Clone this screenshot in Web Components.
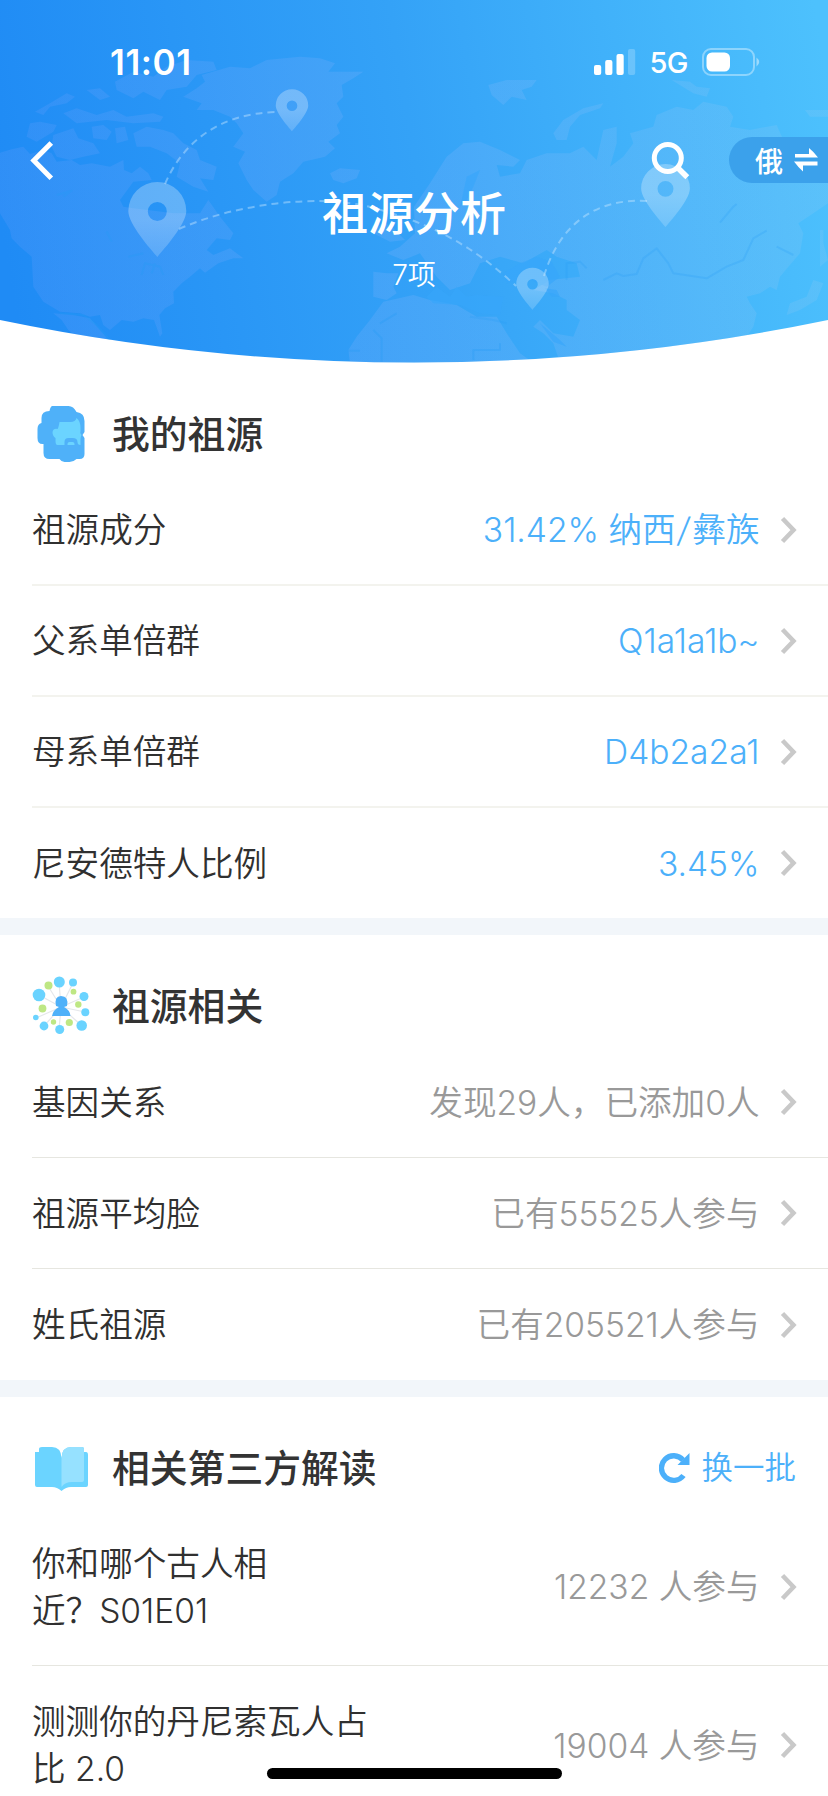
<!DOCTYPE html>
<html lang="zh-CN">
<head>
<meta charset="utf-8">
<title>祖源分析</title>
<style>
html,body{margin:0;padding:0;background:#fff}
body{width:828px;height:1796px;overflow:hidden;font-family:Inter,"Noto Sans CJK SC",sans-serif}
</style>
</head>
<body>
<ancestry-app></ancestry-app>
<script>
const define=(name,html,setup)=>customElements.define(name,class extends HTMLElement{
  connectedCallback(){
    if(this.shadowRoot)return;
    const t=document.createElement('template');
    t.innerHTML=html;
    this.attachShadow({mode:'open'}).append(t.content.cloneNode(true));
    if(setup)setup(this,this.shadowRoot);
  }
});

define('map-backdrop',`<style>:host{display:block;position:absolute;inset:0}svg{display:block}</style>
<svg width="828" height="364" viewBox="0 0 828 364">
<defs>
<linearGradient id="sky" gradientUnits="userSpaceOnUse" x1="0" y1="220" x2="828" y2="80"><stop offset="0" stop-color="#1f8bf5"/><stop offset=".5" stop-color="#34a2f7"/><stop offset="1" stop-color="#4dc1fd"/></linearGradient>
<linearGradient id="land" gradientUnits="userSpaceOnUse" x1="0" y1="0" x2="2484" y2="0"><stop offset="0" stop-color="#7fa2ff"/><stop offset=".5" stop-color="#a3bcff"/><stop offset="1" stop-color="#a2cbee"/></linearGradient>
<linearGradient id="pin" x1="0" y1="0" x2="0" y2="1"><stop offset="0" stop-color="#fff" stop-opacity=".27"/><stop offset=".5" stop-color="#fff" stop-opacity=".27"/><stop offset="1" stop-color="#fff" stop-opacity=".17"/></linearGradient>
<clipPath id="arc"><path d="M0 0H828V320A2037 2037 0 0 1 0 320Z"/></clipPath>
<path id="marker" fill-rule="evenodd" d="M0 37C-3 33-29 5-29-9A29 29 0 1 1 29-9C29 5 3 33 0 37ZM0-18A9.500 9.500 0 1 0 0 1 9.500 9.500 0 0 0 0-18Z"/>
</defs>
<g clip-path="url(#arc)">
<rect width="828" height="364" fill="url(#sky)"/>
<g transform="scale(.33333)" fill="url(#land)" fill-opacity=".17">
<path d="M0 458 35 448 70 440 90 462 130 450 155 460 170 485 215 480 240 495 275 490 330 500 370 480 372 510 395 520 420 500 445 520 455 540 400 545 360 600 370 620 400 625 520 640 600 640 625 600 660 650 700 700 690 720 650 715 620 750 640 765 690 745 730 775 700 775 655 790 615 818 600 805 570 830 545 850 520 875 522 910 495 925 478 945 487 1000 480 1010 462 960 430 955 400 965 365 960 330 990 310 975 300 945 270 950 240 940 180 935 130 905 100 860 95 770 60 740 35 715 30 690 0 640Z"/>
<path d="M160 940 185 960 205 990 230 1010 270 1015 300 1020 330 1025 300 990 270 955 220 945Z"/>
<path d="M550 290 590 265 615 245 605 225 690 200 750 205 800 180 900 170 960 175 1005 190 985 215 1040 215 1090 215 1060 235 1025 255 1030 290 1010 310 1030 350 1010 375 1020 400 985 425 1005 445 975 470 910 485 880 520 840 545 830 585 800 605 760 570 740 540 715 490 735 455 700 440 730 400 710 370 690 350 640 330 590 330 605 310Z"/>
<path d="M90 370 120 365 170 375 160 395 110 425 80 410Z"/>
<path d="M160 405 220 385 235 415 280 430 300 460 250 470 210 480 170 470 155 440Z"/>
<path d="M345 245 400 215 460 230 500 200 560 180 640 185 650 210 590 225 560 260 500 270 480 300 430 275 400 295 350 270Z"/>
<path d="M260 270 300 265 330 290 300 300ZM105 335 150 310 200 280 225 290 200 310 150 320 130 345ZM190 340 230 325 290 345 340 330 380 350 460 340 490 350 480 365 400 370 320 360 230 370Z"/>
<path d="M275 380 310 375 335 395 320 420 280 415ZM345 385 375 380 385 420 350 430ZM400 400 440 380 490 390 520 400 550 430 590 450 600 480 650 500 640 540 600 535 625 575 580 560 530 530 540 490 500 460 450 440 410 440Z"/>
<path d="M990 520 1020 505 1080 510 1070 535 1030 550 1000 540Z"/>
<path d="M1050 1088 1045 1050 1070 1010 1110 960 1150 905 1240 885 1290 900 1370 915 1430 950 1490 950 1520 1000 1560 1060 1600 1088Z"/>
<path d="M1120 815 1160 820 1195 820 1180 860 1190 880 1160 900 1120 890ZM1160 760 1200 740 1245 700 1242 620 1290 550 1340 470 1390 430 1440 425 1500 450 1560 480 1540 500 1490 495 1500 530 1560 520 1580 480 1640 460 1710 460 1750 440 1790 480 1810 390 1850 380 1850 430 1830 500 1870 470 1900 430 1890 400 1960 380 1970 345 2030 320 2080 330 2110 305 2180 320 2200 350 2190 380 2250 390 2330 375 2350 420 2484 420 2484 610 2440 640 2395 670 2410 700 2400 760 2365 800 2340 830 2330 870 2310 860 2280 880 2240 890 2250 910 2270 940 2260 980 2240 1010 2160 1040 2090 1088 1680 1088 1660 1030 1630 1000 1600 980 1620 960 1660 1000 1720 1010 1740 960 1700 930 1700 900 1660 880 1600 870 1650 840 1740 830 1730 790 1670 770 1640 750 1570 790 1500 770 1440 790 1410 850 1350 870 1310 830 1260 760 1210 780Z"/>
<path d="M1120 700 1150 665 1180 685 1215 720 1170 725Z"/>
<path d="M1660 400 1690 360 1750 325 1810 310 1800 325 1740 345 1710 380 1700 420 1670 420ZM1465 255 1520 240 1610 240 1595 260 1565 270 1580 300 1535 290 1510 315 1475 285ZM2015 240 2070 245 2090 260 2130 265 2120 290 2080 280ZM2415 330 2484 330 2484 350 2430 350Z"/>
<path d="M2460 690 2470 690 2470 730 2484 780 2460 800ZM2440 840 2470 850 2450 900 2400 930 2360 945 2370 910 2420 890Z"/>
</g>
<g transform="scale(.33333)" fill="none" stroke="#269bf5" stroke-opacity=".3" stroke-width="6" stroke-linejoin="round">
<path d="M170 585 215 572 190 590M320 695 335 725M425 825 435 790 480 800 490 825M455 820 465 790M385 770 430 760M180 940 250 945 290 975 330 1020M1120 990 1145 1015 1145 1085M1045 1052 1080 1052M1420 1080V1050H1500V1030M1140 970 1190 940"/>
<path d="M1810 840 1850 820 1870 828 1910 822 1930 775 1970 745 2005 790 2020 820 2120 835 2180 800 2230 780 2260 715 2300 692M2160 668 2200 620 2210 612M2330 740 2380 765" stroke-opacity=".22"/>
<path d="M1410 950 1480 960 1520 970M1700 840 1700 790 1740 785 1760 805" stroke-opacity=".22"/>
</g>
<g fill="#38a6fa" fill-opacity=".65" transform="scale(.33333)">
<path d="M1430 885 1510 890 1500 945 1440 940 1380 915 1300 910 1280 890 1310 860 1350 890 1370 860 1400 890ZM1510 820 1560 790 1610 770 1655 785 1680 830 1640 860 1580 835 1520 850ZM1635 865 1670 870 1680 890 1655 890ZM1385 600 1400 530 1440 510 1420 560 1400 600 1380 620ZM1620 970 1680 1020 1700 1040 1660 1025Z"/>
</g>
<g fill="none" stroke="#cde9ff" stroke-opacity=".42" stroke-width="2" stroke-dasharray="7 5">
<path d="M165 184C182 144 218 113 277 112"/>
<path d="M179 229C238 203 318 194 370 207C427 222 470 243 516 286"/>
<path d="M544 276C561 220 600 198 648 201"/>
</g>
<g fill="url(#pin)">
<use href="#marker" transform="translate(157.300 220)"/><use href="#marker" transform="translate(292 110.500) scale(.56)"/>
<use href="#marker" transform="translate(665.500 196) scale(.84)"/><use href="#marker" transform="translate(532.500 289) scale(.56)"/>
</g>
</g>
</svg>`);

define('status-bar',`<style>
:host{display:flex;justify-content:space-between;align-items:center;height:62px;padding:31px 68px 0 110px;color:#fff;box-sizing:content-box}
.time{font:600 35px/62px Inter,sans-serif;letter-spacing:.6px}
.right{display:flex;align-items:center}
.net{font:500 29px/62px Inter,sans-serif;margin:0 14px 0 13px;letter-spacing:-.5px;padding-top:1px}
svg{display:block}
</style>
<span class="time">11:01</span>
<div class="right">
<svg width="42" height="28" viewBox="0 0 42 28" fill="#fff"><rect y="17" width="7.200" height="10" rx="2"/><rect x="11.200" y="12" width="7.200" height="15" rx="2"/><rect x="22.500" y="6" width="7.200" height="21" rx="2"/><rect x="34" y="1" width="7.200" height="26" rx="2" opacity=".22"/></svg>
<span class="net">5G</span>
<svg width="58" height="28" viewBox="0 0 58 28"><rect x="1" y="1" width="51" height="26" rx="8" fill="none" stroke="#fff" stroke-width="2" opacity=".38"/><rect x="4.500" y="4.500" width="23.500" height="19" rx="5.500" fill="#fff"/><path d="M54.500 9.500Q60 14 54.500 18.500Z" fill="#fff" opacity=".45"/></svg>
</div>`);

define('nav-bar',`<style>
:host{display:flex;align-items:center;height:46px;padding-left:28px;margin-top:44px;color:#fff}
.back{margin-right:auto}.search{margin-right:36px}
svg{display:block}
.pill{display:flex;align-items:center;box-sizing:border-box;width:99px;height:46px;padding-left:26px;border-radius:23px 0 0 23px;background:#3ba1eb;gap:11px;font:500 28px/44px Inter,"Noto Sans CJK SC",sans-serif}
.pill span{padding-top:3px}
</style>
<svg class="back" width="30" height="44" viewBox="0 0 30 44" fill="none" stroke="#fff" stroke-width="5"><path d="M23.300 5 5.800 22.500 23.300 40.200"/></svg>
<svg class="search" width="42" height="42" viewBox="0 0 42 42" fill="none" stroke="#fff" stroke-width="5"><circle cx="16.800" cy="19" r="13.500"/><path d="M26 28 36.300 38.300" stroke-width="5.500"/></svg>
<div class="pill"><span>俄</span><svg width="25" height="26" viewBox="0 0 25 26" fill="#fff"><path d="M1 7V10.500H24Q20 5 15 1V7ZM23.500 18.500V14.500H0Q4 20 9 24.500V18.500Z"/></svg></div>`);

define('page-hero',`<style>
:host{display:block;position:relative;height:363px;color:#fff}
.content{position:relative;display:flex;flex-direction:column}
h1{margin:-2.500px 0 0 0;text-align:center;font:500 46px/64px Inter,"Noto Sans CJK SC",sans-serif}
p{margin:0;text-align:center;font:350 28px/60px Inter,"Noto Sans CJK SC",sans-serif}
</style>
<map-backdrop></map-backdrop>
<div class="content"><status-bar></status-bar><nav-bar></nav-bar><h1>祖源分析</h1><p>7项</p></div>`);

const icons={
face:`<g transform="translate(-4.500 -1)"><path fill="#4fb1f9" d="M25 2H41Q46 2 49 8 57 9 57 17V28L55 31 57 34V50Q57 55 52 55H49Q46 58 42 58H37Q34 58 32 55H22Q16 55 16 49V40H15Q10 40 10 34V25Q10 20 14 19V14Q14 7 22 7 23 2 25 2Z"/><path fill="#6bd4ff" d="M32 18H43Q48 18 49 14 53 17 53 24V27Q52 29 54 31 53 33 53 35V41Q50 41 50 38 50 34 45 34H41Q37 34 37 38V41H30Q28 41 28 37V34Q25 32 25 28 26 24 30 25Q31 24 32 18Z"/><path fill="#6bd4ff" d="M40 41V40Q40 38 42 38H45Q47 38 47 40V41Z"/></g>`,
network:`<g stroke="#e5e7ea" stroke-width="1.200"><path d="M29 30 27 5M29 30 41 6M29 30 7 18M29 30 52 20M29 30 53 35M29 30 50 49M29 30 27 53M29 30 12 49M29 30 4 41M29 30 16 9"/></g><g fill="#6ad3ff"><circle cx="27.300" cy="5" r="5.500"/><circle cx="41" cy="5.500" r="4"/><circle cx="7" cy="18" r="6.300"/><circle cx="52" cy="19.500" r="4.500"/><circle cx="53.300" cy="35.200" r="4"/><circle cx="49.700" cy="48.500" r="5.300"/><circle cx="27.700" cy="52.500" r="4.500"/><circle cx="12" cy="49" r="4.400"/><circle cx="3.800" cy="40.500" r="2.800"/></g><g fill="#bee784"><circle cx="16.500" cy="8.500" r="4"/><circle cx="41.500" cy="14.700" r="2.900"/><circle cx="46.300" cy="27.500" r="3.200"/><circle cx="10.500" cy="31.500" r="3.900"/><circle cx="21.500" cy="45" r="2.700"/><circle cx="37.300" cy="45.500" r="3.600"/></g><path fill="#4fb1f9" d="M24 29Q22 19 29 19 37 19 35 29L32 30Q38 33 38.500 39H20Q21 33 27 30Z"/>`,
book:`<g transform="translate(0 -1)"><path fill="#6bd4ff" d="M3 14H7V11Q7 9 10 9H20Q29 9 29.500 20 30 9 39 9H50Q52 9 52 11V14H54Q56 14 56 17V47Q56 49 54 49H39Q34 49 29.500 53 25 49 20 49H5Q3 49 3 47Z"/><path fill="#96e1ff" d="M29.500 20Q30 9 39 9H50Q52 9 52 11V42Q52 44 50 44H40Q33 44 29.500 49Z"/></g>`
};
define('section-heading',`<style>
:host{display:flex;align-items:center;height:80px;padding:31px 33px 1px 32px;color:#333}
:host([icon=book]){padding-bottom:0}
svg{display:block;width:58px;height:58px;margin-right:22px;flex:none;overflow:visible}
h2{margin:0 auto 0 0;font:500 37.800px/80px Inter,"Noto Sans CJK SC",sans-serif}
</style>
<svg viewBox="0 0 58 58"></svg><h2><slot></slot></h2><slot name="action"></slot>`,
(host,root)=>{root.querySelector('svg').innerHTML=icons[host.getAttribute('icon')]});

define('refresh-button',`<style>
:host{display:flex;align-items:center;color:#4cb0fa;font:350 31.500px/46px Inter,"Noto Sans CJK SC",sans-serif;gap:11px;margin-right:-1px}svg{display:block}
</style><svg width="31" height="32" viewBox="0 0 31 32"><path d="M24.500 23.500A12.300 12.300 0 1 1 24 8" fill="none" stroke="#4cb0fa" stroke-width="5.300"/><path d="M30.500 1V13H18.500Z" fill="#4cb0fa"/></svg><span><slot></slot></span>`);

define('list-row',`<style>
:host{display:flex;box-sizing:border-box;height:111px;margin-left:32px;padding-right:31px;align-items:center;border-bottom:1px solid #e6e6e0;color:#333;font:350 33.600px/47px Inter,"Noto Sans CJK SC",sans-serif}
:host([accent]){border-bottom:2px solid #f3f3ee}
:host([tall]){height:158px}
:host([last]){border-bottom:0}
:host([accent][last]){height:110px}
.label{margin-right:auto;white-space:nowrap;color:#303030}
.value{white-space:nowrap;color:#999}
:host([accent]) .value{color:#4cb0fa}
svg{display:block;margin-left:19.500px;width:18px;height:30px;flex:none}
</style>
<div class="label"><slot></slot></div><div class="value"><slot name="value"></slot></div>
<svg viewBox="0 0 18 30" fill="none" stroke="#c9c9c9" stroke-width="4.500"><path d="M3.500 3.500 14.500 15 3.500 26.500"/></svg>`);

define('wide-slash',`<style>
:host{display:inline-block;margin:0 2.500px;transform:skewX(-8deg)}
</style><slot></slot>`);

define('list-section',`<style>
:host{display:block}
:host([divided]){border-top:17px solid #f2f6fa}
</style><slot></slot>`);

define('ancestry-app',`<style>
:host{display:block;position:relative;width:828px;height:1796px;overflow:hidden;background:#fff}
.home{position:absolute;left:267px;top:1768px;width:295px;height:11px;border-radius:6px;background:#000}
</style>
<page-hero></page-hero>
<main>
<list-section>
<section-heading icon="face">我的祖源</section-heading>
<list-row accent>祖源成分<span slot="value">31.42% 纳西<wide-slash>/</wide-slash>彝族</span></list-row>
<list-row accent>父系单倍群<span slot="value">Q1a1a1b~</span></list-row>
<list-row accent>母系单倍群<span slot="value">D4b2a2a1</span></list-row>
<list-row accent last>尼安德特人比例<span slot="value">3.45%</span></list-row>
</list-section>
<list-section divided>
<section-heading icon="network">祖源相关</section-heading>
<list-row>基因关系<span slot="value">发现29人，已添加0人</span></list-row>
<list-row>祖源平均脸<span slot="value">已有55525人参与</span></list-row>
<list-row last>姓氏祖源<span slot="value">已有205521人参与</span></list-row>
</list-section>
<list-section divided>
<section-heading icon="book">相关第三方解读<refresh-button slot="action">换一批</refresh-button></section-heading>
<list-row tall>你和哪个古人相<br>近？S01E01<span slot="value">12232 人参与</span></list-row>
<list-row tall last>测测你的丹尼索瓦人占<br>比 2.0<span slot="value">19004 人参与</span></list-row>
</list-section>
</main>
<div class="home"></div>`);
</script>
</body>
</html>
